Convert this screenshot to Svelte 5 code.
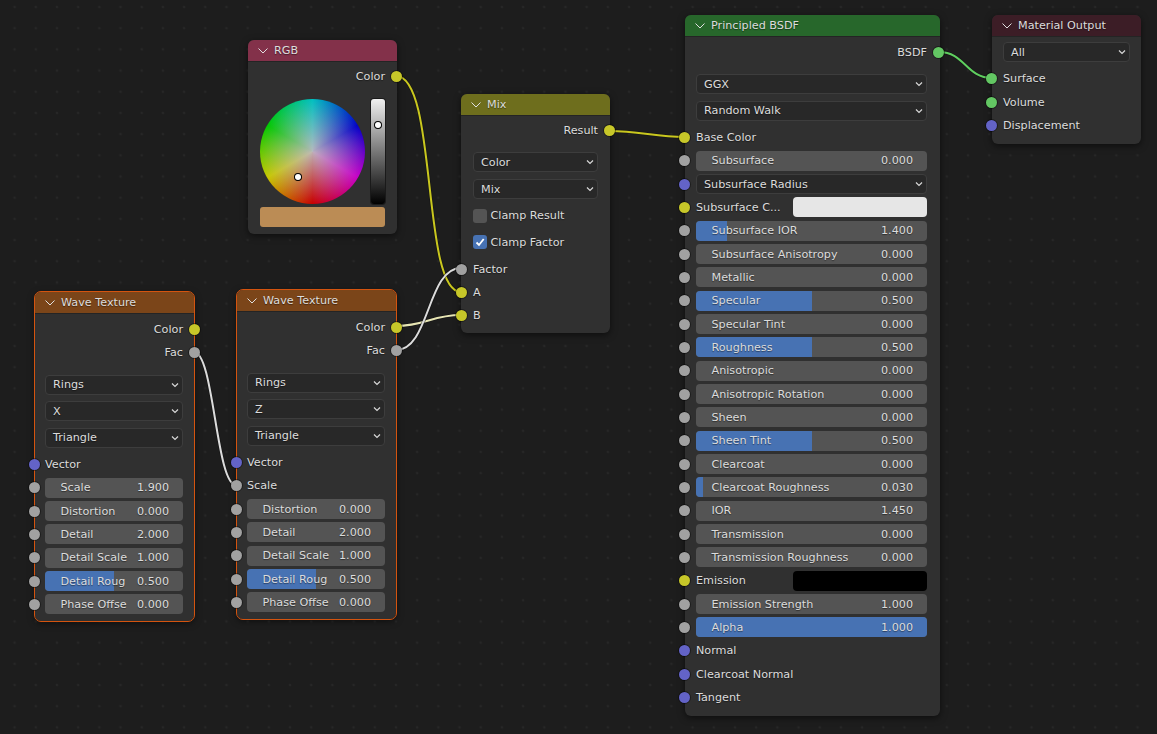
<script>
  const dropdown = (label) => ({ kind: 'select', label });
  const num = (label, value, fill = 0, sock = 'gray') => ({ kind: 'num', label, value, fill, sock });
  const sock = (label, sock, side = 'in') => ({ kind: 'sock', label, sock, side });

  const waveRows = (axis, inset) => [
    sock('Color', 'yellow', 'out'),
    sock('Fac', 'gray', 'out'),
    { kind: 'spacer' },
    dropdown('Rings'),
    dropdown(axis),
    dropdown('Triangle'),
    sock('Vector', 'blue'),
    inset,
    num('Distortion', '0.000'),
    num('Detail', '2.000'),
    num('Detail Scale', '1.000'),
    num('Detail Roug', '0.500', 50),
    num('Phase Offse', '0.000')
  ];

  const nodes = [
    {
      id: 'rgb', title: 'RGB', rows: [sock('Color', 'yellow', 'out'), { kind: 'wheel' }]
    },
    { id: 'wave1', title: 'Wave Texture', selected: true, rows: waveRows('X', num('Scale', '1.900')) },
    { id: 'wave2', title: 'Wave Texture', selected: true, rows: waveRows('Z', sock('Scale', 'gray')) },
    {
      id: 'mix', title: 'Mix', rows: [
        sock('Result', 'yellow', 'out'),
        { kind: 'spacer' },
        dropdown('Color'),
        dropdown('Mix'),
        { kind: 'check', label: 'Clamp Result', on: false },
        { kind: 'check', label: 'Clamp Factor', on: true },
        sock('Factor', 'gray'),
        sock('A', 'yellow'),
        sock('B', 'yellow')
      ]
    },
    {
      id: 'bsdf', title: 'Principled BSDF', rows: [
        sock('BSDF', 'green', 'out'),
        { kind: 'spacer' },
        dropdown('GGX'),
        dropdown('Random Walk'),
        sock('Base Color', 'yellow'),
        num('Subsurface', '0.000'),
        { ...dropdown('Subsurface Radius'), sock: 'blue' },
        { kind: 'swatch', label: 'Subsurface C...', color: '#e6e6e6' },
        num('Subsurface IOR', '1.400', 13.4),
        num('Subsurface Anisotropy', '0.000'),
        num('Metallic', '0.000'),
        num('Specular', '0.500', 50),
        num('Specular Tint', '0.000'),
        num('Roughness', '0.500', 50),
        num('Anisotropic', '0.000'),
        num('Anisotropic Rotation', '0.000'),
        num('Sheen', '0.000'),
        num('Sheen Tint', '0.500', 50),
        num('Clearcoat', '0.000'),
        num('Clearcoat Roughness', '0.030', 3),
        num('IOR', '1.450'),
        num('Transmission', '0.000'),
        num('Transmission Roughness', '0.000'),
        { kind: 'swatch', label: 'Emission', color: '#000' },
        num('Emission Strength', '1.000'),
        num('Alpha', '1.000', 100),
        sock('Normal', 'blue'),
        sock('Clearcoat Normal', 'blue'),
        sock('Tangent', 'blue')
      ]
    },
    {
      id: 'output', title: 'Material Output', rows: [
        dropdown('All'),
        sock('Surface', 'green'),
        sock('Volume', 'green'),
        sock('Displacement', 'blue')
      ]
    }
  ];

  const links = [
    { d: 'M396 76 C 438 76, 421 292, 461 292', color: '#c9c71e' },
    { d: 'M396 326 C 425 326, 432 315, 461 315', color: '#e8e6b4' },
    { d: 'M396 350 C 430 350, 427 268, 461 268', color: '#dcdcdc' },
    { d: 'M194 352 C 214 352, 216 485, 236 485', color: '#dcdcdc' },
    { d: 'M609 131 C 640 131, 655 137, 685 137', color: '#c9c71e' },
    { d: 'M939 52 C 965 52, 966 78, 992 78', color: '#5fcf5f' }
  ];
</script>

<main class="canvas">
  <svg class="links" width="1157" height="734" viewBox="0 0 1157 734">
    {#each links as link}
      <path d={link.d} fill="none" stroke="#111" stroke-opacity="0.5" stroke-width="3.5" />
      <path d={link.d} fill="none" stroke={link.color} stroke-width="2" />
    {/each}
  </svg>

  {#each nodes as node}
    <section class="node {node.id}" class:selected={node.selected}>
      <header>
        <svg class="chev" width="10" height="6" viewBox="0 0 10 6"><path d="M0.5 0.5 L5 5 L9.5 0.5" fill="none" stroke="#e0e0e0" stroke-width="1" /></svg>
        <span>{node.title}</span>
      </header>
      <div class="body">
        {#each node.rows as row}
          {#if row.kind === 'spacer'}
            <div class="spacer"></div>
          {:else if row.kind === 'sock'}
            <div class="row label {row.side}">
              <i class="socket {row.sock} {row.side}"></i>
              <span>{row.label}</span>
            </div>
          {:else if row.kind === 'select'}
            <div class="row" class:spaced={!row.sock}>
              {#if row.sock}<i class="socket {row.sock} in"></i>{/if}
              <div class="select">
                <span>{row.label}</span>
                <svg width="8" height="6" viewBox="0 0 8 6"><path d="M1 1.5 L4 4.5 L7 1.5" fill="none" stroke="#d8d8d8" stroke-width="1.2" /></svg>
              </div>
            </div>
          {:else if row.kind === 'num'}
            <div class="row">
              <i class="socket {row.sock} in"></i>
              <div class="num">
                {#if row.fill}<b class="fill" style="width: {row.fill}%"></b>{/if}
                <span class="name">{row.label}</span>
                <span class="val">{row.value}</span>
              </div>
            </div>
          {:else if row.kind === 'swatch'}
            <div class="row label in">
              <i class="socket yellow in"></i>
              <span class="swatch-name">{row.label}</span>
              <div class="swatch" style="background: {row.color}"></div>
            </div>
          {:else if row.kind === 'check'}
            <div class="row check spaced">
              <div class="box" class:on={row.on}>
                {#if row.on}
                  <svg width="12" height="12" viewBox="0 0 12 12"><path d="M2.5 6.5 L5 9 L9.7 3" fill="none" stroke="#fff" stroke-width="1.8" /></svg>
                {/if}
              </div>
              <span>{row.label}</span>
            </div>
          {:else if row.kind === 'wheel'}
            <div class="picker">
              <div class="wheel-row">
                <div class="wheel"><em class="dot wheel-dot"></em></div>
                <div class="value"><em class="dot value-dot"></em></div>
              </div>
              <div class="result"></div>
            </div>
          {/if}
        {/each}
      </div>
    </section>
  {/each}
</main>

<style>
  :global(body) {
    margin: 0;
    background: #1d1d1d;
  }
  .canvas {
    position: relative;
    width: 1157px;
    height: 734px;
    overflow: hidden;
    background-color: #1d1d1d;
    background-image: radial-gradient(circle, #272727 1.2px, transparent 1.6px);
    background-size: 21.2px 21.2px;
    background-position: 4px -3.6px;
    font-family: "DejaVu Sans", sans-serif;
    font-size: 11.2px;
    color: #dcdcdc;
    text-shadow: 0 1px 1px rgba(0, 0, 0, 0.45);
  }
  .links {
    position: absolute;
    inset: 0;
    z-index: 1;
  }
  .node {
    position: absolute;
    z-index: 2;
    background: #303030;
    border-radius: 6px;
    box-shadow: 0 2px 7px rgba(0, 0, 0, 0.55);
  }
  .node.selected {
    outline: 1px solid #d4540f;
  }
  .rgb { left: 248px; top: 40px; width: 149px; }
  .wave1 { left: 35px; top: 292px; width: 159px; }
  .wave2 { left: 237px; top: 290px; width: 159px; }
  .mix { left: 461px; top: 94px; width: 149px; }
  .bsdf { left: 685px; top: 15px; width: 255px; }
  .output { left: 992px; top: 15px; width: 149px; }

  header {
    display: flex;
    align-items: center;
    gap: 6px;
    height: 21px;
    padding-left: 10px;
    border-radius: 6px 6px 0 0;
    box-shadow: 0 1px 0 rgba(0, 0, 0, 0.25);
  }
  .rgb header { background: #83314a; }
  .wave1 header, .wave2 header { background: #7b4519; }
  .mix header { background: #6e6e1d; }
  .bsdf header { background: #27672b; }
  .output header { background: #3c1d26; }

  .body {
    display: flex;
    flex-direction: column;
    gap: 3.33px;
    padding: 5.67px 12px 7px;
  }
  .mix .body { padding-top: 5.4px; }
  .wave1 .body, .wave2 .body { padding: 6.2px 11px 6.5px 10px; }
  .bsdf .body { padding: 6.2px 13px 8.5px 11px; }
  .output .body { padding: 6.2px 11px 8.5px 11px; }

  .row {
    position: relative;
    height: 20px;
    display: flex;
    align-items: center;
    flex: none;
  }
  .row.spaced { margin-bottom: 3.33px; }
  .label.out { justify-content: flex-end; }
  .spacer { height: 5.33px; }
  .socket {
    position: absolute;
    width: 11px;
    height: 11px;
    border-radius: 50%;
    top: 4.5px;
    box-shadow: 0 0 0 1px rgba(0, 0, 0, 0.4);
  }
  .socket.in { left: -17px; }
  .wave1 .socket.in, .wave2 .socket.in { left: -16px; }
  .socket.out { right: -17px; }
  .yellow { background: #c7c729; }
  .gray { background: #a1a1a1; }
  .blue { background: #6363c7; }
  .green { background: #63c763; }

  .select, .num {
    flex: 1;
    min-width: 0;
    height: 20px;
    box-sizing: border-box;
    border-radius: 4px;
    display: flex;
    align-items: center;
    justify-content: space-between;
  }
  .select {
    background: #282828;
    border: 1px solid #3d3d3d;
    padding: 0 3px 0 7px;
  }
  .num {
    position: relative;
    overflow: hidden;
    background: #545454;
    padding: 0 14px 0 15.5px;
  }
  .fill {
    position: absolute;
    left: 0;
    top: 0;
    bottom: 0;
    background: #4772b3;
  }
  .name, .val {
    position: relative;
    white-space: nowrap;
  }
  .swatch-name { width: 97px; flex: none; white-space: nowrap; }
  .swatch {
    flex: 1;
    height: 20px;
    border-radius: 4px;
  }
  .check { gap: 3.5px; }
  .box {
    width: 14px;
    height: 14px;
    border-radius: 3px;
    background: #545454;
    display: flex;
    align-items: center;
    justify-content: center;
  }
  .box.on { background: #4772b3; }

  .picker {
    margin-top: 8.67px;
    display: flex;
    flex-direction: column;
    gap: 3.5px;
  }
  .wheel-row {
    display: flex;
    justify-content: space-between;
  }
  .wheel {
    position: relative;
    width: 105px;
    height: 105px;
    border-radius: 50%;
    background:
      radial-gradient(circle closest-side, rgba(190, 185, 190, 0.95), rgba(190, 190, 190, 0) 100%),
      conic-gradient(#00c0c0, #0000c8 60deg, #c800c8 120deg, #c80000 180deg, #c8c800 240deg, #00c800 300deg, #00c0c0);
  }
  .value {
    position: relative;
    width: 14px;
    height: 105px;
    border-radius: 3px;
    background: linear-gradient(#f0f0f0, #000);
    box-shadow: 0 0 0 1px #1a1a1a;
  }
  .dot {
    position: absolute;
    width: 6px;
    height: 6px;
    border-radius: 50%;
    background: #fff;
    box-shadow: 0 0 0 1px #000;
  }
  .wheel-dot { left: 34.5px; top: 75px; }
  .value-dot { left: 4.4px; top: 23.7px; }
  .result {
    height: 19.5px;
    border-radius: 3px;
    background: #bb8c55;
  }
</style>
